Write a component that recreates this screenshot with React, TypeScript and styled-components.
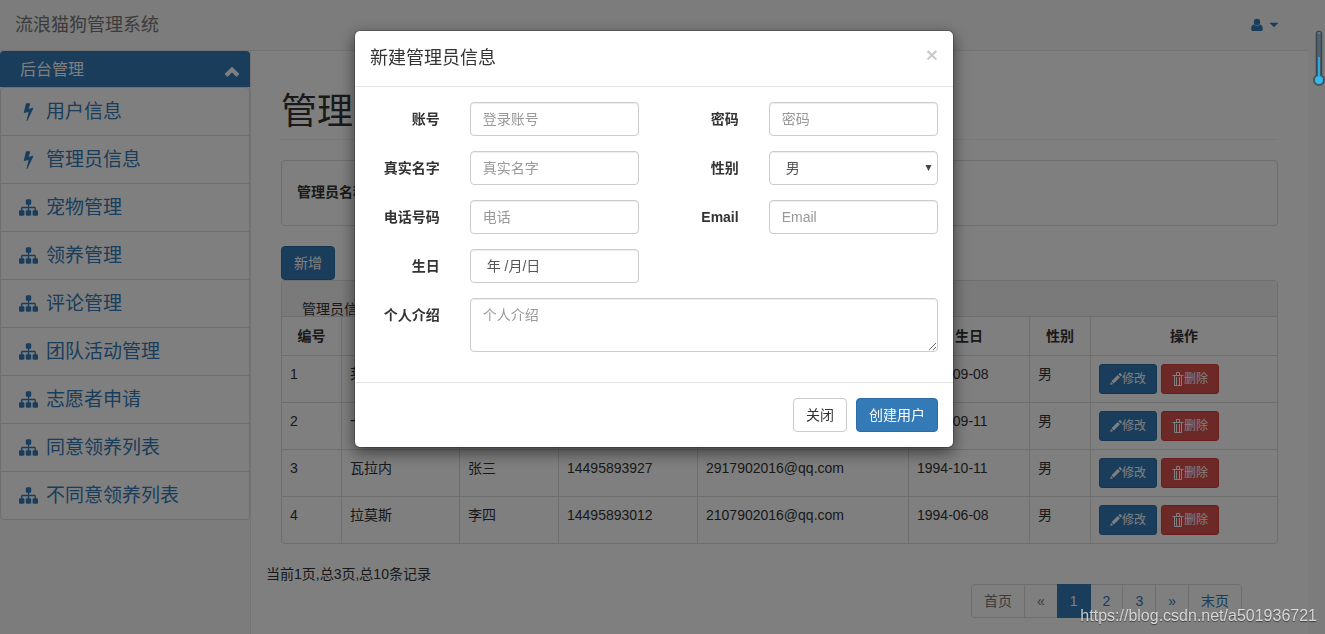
import React from "react";
import styled, { createGlobalStyle, css } from "styled-components";

const GlobalStyle = createGlobalStyle`
  *, *::before, *::after { box-sizing: border-box; }
  body {
    margin: 0;
    background: #f8f8f8;
    color: #333;
    font: 14px/20px "Liberation Sans", "Noto Sans CJK SC", sans-serif;
    overflow: hidden;
  }
  button, input, select, textarea { font: inherit; }
  a { color: #337ab7; text-decoration: none; }
`;

const Page = styled.div`
  min-height: 100vh;
  padding-right: 17px;
  display: flex;
  flex-direction: column;
`;

const TopBar = styled.header`
  display: flex;
  align-items: center;
  justify-content: space-between;
  height: 51px;
  padding: 0 29px 0 15px;
  border-bottom: 1px solid #e7e7e7;
`;

const Brand = styled.a`
  color: #777;
  font-size: 18px;
  line-height: 20px;
`;

const UserMenu = styled.button`
  display: flex;
  align-items: center;
  gap: 5px;
  padding: 0;
  border: 0;
  background: none;
  color: #337ab7;
`;

const Columns = styled.div`
  display: flex;
  flex: 1;
`;

const Sidebar = styled.nav`
  flex: 0 0 250px;
`;

const SidebarHeading = styled.button`
  display: flex;
  align-items: center;
  justify-content: space-between;
  width: 100%;
  height: 36px;
  padding: 2px 10px 0 20px;
  border: 0;
  border-radius: 4px 4px 0 0;
  background: #337ab7;
  color: #fff;
  font-size: 16px;
`;

const MenuList = styled.ul`
  margin: 0;
  padding: 0;
  list-style: none;
  border: 1px solid #ddd;
  border-radius: 4px;
  background: #fff;
`;

const MenuItem = styled.li`
  & + & { border-top: 1px solid #ddd; }
`;

const MenuLink = styled.a`
  display: flex;
  align-items: center;
  gap: 8px;
  height: 47px;
  padding: 0 18px;
  font-size: 19px;
  line-height: 28px;
`;

const Main = styled.main`
  flex: 1;
  min-width: 0;
  padding: 0 30px;
  border-left: 1px solid #e7e7e7;
  background: #fff;
`;

const PageTitle = styled.h1`
  margin: 40px 0 20px;
  padding: 1px 0 8px;
  border-bottom: 1px solid #eee;
  font-size: 36px;
  line-height: 39px;
  font-weight: 400;
`;

const SearchPanel = styled.section`
  margin-bottom: 20px;
  padding: 21px 15px 23px;
  border: 1px solid #ddd;
  border-radius: 4px;
  font-weight: 700;
`;

const tones = {
  plain: css`background: #fff; border-color: #ccc; color: #333;`,
  primary: css`background: #337ab7; border-color: #2e6da4; color: #fff;`,
  danger: css`background: #d9534f; border-color: #d43f3a; color: #fff;`,
};

const Button = styled.button<{ $tone: keyof typeof tones; $small?: boolean }>`
  display: inline-flex;
  align-items: center;
  justify-content: center;
  height: ${(p) => (p.$small ? 30 : 34)}px;
  padding: 0 ${(p) => (p.$small ? 10 : 12)}px;
  border: 1px solid;
  border-radius: ${(p) => (p.$small ? 3 : 4)}px;
  font-size: ${(p) => (p.$small ? 12 : 14)}px;
  white-space: nowrap;
  ${(p) => tones[p.$tone]}
`;

const TablePanel = styled.section`
  border: 1px solid #ddd;
  border-radius: 4px;
  overflow: hidden;
`;

const PanelHeading = styled.div`
  height: 36px;
  padding: 18px 20px 0;
  border-bottom: 1px solid #ddd;
  background: #f5f5f5;
  line-height: 20px;
`;

const Table = styled.table`
  width: 100%;
  table-layout: fixed;
  border-spacing: 0;
`;

const HeadCell = styled.th`
  height: 38px;
  padding: 9px 8px;
  text-align: center;
  & + & { border-left: 1px solid #ddd; }
`;

const Cell = styled.td`
  padding: 8px;
  border-top: 1px solid #ddd;
  vertical-align: top;
  white-space: nowrap;
  & + & { border-left: 1px solid #ddd; }
`;

const Actions = styled.div`
  display: flex;
  gap: 4px;
`;

const Footer = styled.footer`
  margin: 20px -15px 0;
`;

const Pagination = styled.ul`
  display: flex;
  justify-content: flex-end;
  margin: 0;
  padding: 0 51px 0 0;
  list-style: none;
`;

const PageLink = styled.a<{ $state?: "active" | "disabled" }>`
  display: block;
  margin-left: -1px;
  padding: 6px 12px;
  border: 1px solid #ddd;
  background: #fff;
  li:first-child > & { border-radius: 4px 0 0 4px; }
  li:last-child > & { border-radius: 0 4px 4px 0; }
  ${(p) => p.$state === "disabled" && css`color: #777;`}
  ${(p) =>
    p.$state === "active" &&
    css`
      position: relative;
      background: #337ab7;
      border-color: #337ab7;
      color: #fff;
    `}
`;

const Backdrop = styled.div`
  position: fixed;
  inset: 0;
  padding: 30px 17px 30px 0;
  background: rgba(0, 0, 0, 0.5);
`;

const Dialog = styled.form`
  width: 600px;
  max-width: 100%;
  margin: 0 auto;
  border: 1px solid rgba(0, 0, 0, 0.2);
  border-radius: 6px;
  background: #fff;
  background-clip: padding-box;
  box-shadow: 0 5px 15px rgba(0, 0, 0, 0.5);
`;

const DialogHeader = styled.div`
  display: flex;
  justify-content: space-between;
  align-items: flex-start;
  height: 56px;
  padding: 13px 15px;
  border-bottom: 1px solid #e5e5e5;
`;

const DialogTitle = styled.h4`
  margin: 0;
  font-size: 18px;
  line-height: 28px;
  font-weight: 400;
`;

const CloseButton = styled.button`
  padding: 0;
  border: 0;
  background: none;
  color: #000;
  opacity: 0.2;
  font-size: 21px;
  line-height: 21px;
  font-weight: 700;
`;

const Fields = styled.div`
  display: grid;
  grid-template-columns: 2fr 4fr 2fr 4fr;
  row-gap: 15px;
  padding: 15px 0 30px;
`;

const Label = styled.label<{ $newRow?: boolean }>`
  padding: 7px 15px 0;
  text-align: right;
  font-weight: 700;
  white-space: nowrap;
  ${(p) => p.$newRow && css`grid-column-start: 1;`}
`;

const Control = styled.div<{ $wide?: boolean }>`
  position: relative;
  display: flex;
  padding: 0 15px;
  ${(p) => p.$wide && css`grid-column: span 3;`}
`;

const fieldStyle = css`
  width: 100%;
  min-width: 0;
  height: 34px;
  padding: 6px 12px;
  border: 1px solid #ccc;
  border-radius: 4px;
  background: #fff;
  color: #555;
  line-height: 20px;
  box-shadow: inset 0 1px 1px rgba(0, 0, 0, 0.075);
  &::placeholder { color: #999; opacity: 1; }
`;

const Input = styled.input`
  ${fieldStyle}
`;

const DateInput = styled.input`
  ${fieldStyle}
  padding-left: 16px;
  &::placeholder { color: #555; }
`;

const Select = styled.select`
  ${fieldStyle}
  padding-left: 16px;
  appearance: none;
`;

const SelectArrow = styled.svg`
  position: absolute;
  top: 14px;
  right: 21px;
  pointer-events: none;
`;

const TextArea = styled.textarea`
  ${fieldStyle}
  height: 54px;
`;

const DialogFooter = styled.div`
  display: flex;
  justify-content: flex-end;
  gap: 9px;
  padding: 15px;
  border-top: 1px solid #e5e5e5;
`;

const Thermometer = styled.svg`
  position: fixed;
  top: 29px;
  right: 0;
`;

const Watermark = styled.div`
  position: fixed;
  right: 8px;
  bottom: 8px;
  color: rgba(255, 255, 255, 0.75);
  font-size: 16px;
  line-height: 20px;
  text-shadow: 0 1px 1px rgba(0, 0, 0, 0.5);
`;

const BoltIcon = () => (
  <svg width="19" height="19" viewBox="0 0 1792 1792" fill="currentColor" aria-hidden="true">
    <path d="M1333 566q18 20 7 44l-540 1157q-13 25-42 25-4 0-14-2-17-5-25.5-19t-4.5-30l197-808-406 101q-4 1-12 1-18 0-31-11-18-15-13-39l201-825q4-14 16-23t28-9h328q19 0 32 12.5t13 29.5q0 8-5 18l-171 463 396-98q8-2 12-2 19 0 34 15z" />
  </svg>
);

const SitemapIcon = () => (
  <svg width="19" height="19" viewBox="0 0 1792 1792" fill="currentColor" aria-hidden="true">
    <path d="M1792 1248v320q0 40-28 68t-68 28h-320q-40 0-68-28t-28-68v-320q0-40 28-68t68-28h96v-192h-512v192h96q40 0 68 28t28 68v320q0 40-28 68t-68 28h-320q-40 0-68-28t-28-68v-320q0-40 28-68t68-28h96v-192h-512v192h96q40 0 68 28t28 68v320q0 40-28 68t-68 28h-320q-40 0-68-28t-28-68v-320q0-40 28-68t68-28h96v-192q0-52 38-90t90-38h512v-192h-96q-40 0-68-28t-28-68v-320q0-40 28-68t68-28h320q40 0 68 28t28 68v320q0 40-28 68t-68 28h-96v192h512q52 0 90 38t38 90v192h96q40 0 68 28t28 68z" />
  </svg>
);

const UserIcon = () => (
  <svg width="14" height="14" viewBox="0 0 14 14" fill="currentColor" aria-hidden="true">
    <circle cx="7" cy="4" r="3.200" />
    <path d="M4 6.500c1.800 1.600 4.200 1.600 6 0 2 .2 2.800 2.200 2.800 4.400 0 1.400-.8 2.100-2 2.100H3.200c-1.200 0-2-.7-2-2.100C1.200 8.700 2 6.700 4 6.500z" />
  </svg>
);

const CaretIcon = () => (
  <svg width="10" height="6" viewBox="0 0 10 6" fill="currentColor" aria-hidden="true">
    <path d="M1 1h8L5 5z" stroke="currentColor" strokeLinejoin="round" strokeWidth=".5" />
  </svg>
);

const ChevronUpIcon = () => (
  <svg width="16" height="16" viewBox="0 0 16 16" fill="none" aria-hidden="true">
    <path d="M2 13.500l6-6 6 6" stroke="#fff" strokeWidth="4" />
  </svg>
);

const PencilIcon = () => (
  <svg width="12" height="12" viewBox="0 0 12 12" fill="currentColor" aria-hidden="true">
    <path d="M9.300.4c.4-.4.9-.4 1.300 0l1 1c.4.4.4.9 0 1.300l-.9.900-2.300-2.300zM7.700 2l2.300 2.300-6.200 6.200-2.300-2.300zM1 8.900L3.100 11 .1 12z" />
  </svg>
);

const TrashIcon = () => (
  <svg width="12" height="14" viewBox="0 0 12 14" fill="none" stroke="currentColor" aria-hidden="true">
    <path d="M.5 3.500h11M4.500 3V.5h3V3M2.500 4v9.500h7V4M4.500 5v8M7.500 5v8" />
  </svg>
);

const menu = [
  { text: "用户信息", Icon: BoltIcon },
  { text: "管理员信息", Icon: BoltIcon },
  { text: "宠物管理", Icon: SitemapIcon },
  { text: "领养管理", Icon: SitemapIcon },
  { text: "评论管理", Icon: SitemapIcon },
  { text: "团队活动管理", Icon: SitemapIcon },
  { text: "志愿者申请", Icon: SitemapIcon },
  { text: "同意领养列表", Icon: SitemapIcon },
  { text: "不同意领养列表", Icon: SitemapIcon },
];

const columns = [
  { title: "编号", width: 59 },
  { title: "用户名", width: 118 },
  { title: "姓名", width: 99 },
  { title: "电话", width: 139 },
  { title: "Email", width: 211 },
  { title: "生日", width: 121 },
  { title: "性别", width: 61 },
  { title: "操作", width: 187 },
];

const admins = [
  ["1", "莱昂", "王五", "14495893925", "2917902015@qq.com", "1994-09-08", "男"],
  ["2", "一凡", "赵六", "14495893926", "2917902014@qq.com", "1994-09-11", "男"],
  ["3", "瓦拉内", "张三", "14495893927", "2917902016@qq.com", "1994-10-11", "男"],
  ["4", "拉莫斯", "李四", "14495893012", "2107902016@qq.com", "1994-06-08", "男"],
];

const pages: { text: string; state?: "active" | "disabled" }[] = [
  { text: "首页", state: "disabled" },
  { text: "«", state: "disabled" },
  { text: "1", state: "active" },
  { text: "2" },
  { text: "3" },
  { text: "»" },
  { text: "末页" },
];

export default function App() {
  return (
    <>
      <GlobalStyle />
      <Page>
        <TopBar>
          <Brand href="#">流浪猫狗管理系统</Brand>
          <UserMenu type="button" aria-label="用户">
            <UserIcon />
            <CaretIcon />
          </UserMenu>
        </TopBar>
        <Columns>
          <Sidebar>
            <SidebarHeading type="button">
              后台管理
              <ChevronUpIcon />
            </SidebarHeading>
            <MenuList>
              {menu.map(({ text, Icon }) => (
                <MenuItem key={text}>
                  <MenuLink href="#">
                    <Icon />
                    {text}
                  </MenuLink>
                </MenuItem>
              ))}
            </MenuList>
          </Sidebar>
          <Main>
            <PageTitle>管理员信息</PageTitle>
            <SearchPanel>管理员名称</SearchPanel>
            <Button type="button" $tone="primary">新增</Button>
            <TablePanel>
              <PanelHeading>管理员信息列表</PanelHeading>
              <Table>
                <colgroup>
                  {columns.map((c) => (
                    <col key={c.title} width={c.width} />
                  ))}
                </colgroup>
                <thead>
                  <tr>
                    {columns.map((c) => (
                      <HeadCell key={c.title}>{c.title}</HeadCell>
                    ))}
                  </tr>
                </thead>
                <tbody>
                  {admins.map((row) => (
                    <tr key={row[0]}>
                      {row.map((value, i) => (
                        <Cell key={i}>{value}</Cell>
                      ))}
                      <Cell>
                        <Actions>
                          <Button type="button" $tone="primary" $small>
                            <PencilIcon />
                            修改
                          </Button>
                          <Button type="button" $tone="danger" $small>
                            <TrashIcon />
                            删除
                          </Button>
                        </Actions>
                      </Cell>
                    </tr>
                  ))}
                </tbody>
              </Table>
            </TablePanel>
            <Footer>
              当前1页,总3页,总10条记录
              <Pagination>
                {pages.map((p) => (
                  <li key={p.text}>
                    <PageLink href="#" $state={p.state}>{p.text}</PageLink>
                  </li>
                ))}
              </Pagination>
            </Footer>
          </Main>
        </Columns>
      </Page>

      <Backdrop>
        <Dialog role="dialog" aria-labelledby="dialog-title">
          <DialogHeader>
            <DialogTitle id="dialog-title">新建管理员信息</DialogTitle>
            <CloseButton type="button" aria-label="关闭">×</CloseButton>
          </DialogHeader>
          <Fields>
            <Label htmlFor="account">账号</Label>
            <Control><Input id="account" placeholder="登录账号" /></Control>
            <Label htmlFor="password">密码</Label>
            <Control><Input id="password" type="password" placeholder="密码" /></Control>
            <Label htmlFor="realname">真实名字</Label>
            <Control><Input id="realname" placeholder="真实名字" /></Control>
            <Label htmlFor="gender">性别</Label>
            <Control>
              <Select id="gender" defaultValue="男">
                <option>男</option>
                <option>女</option>
              </Select>
              <SelectArrow width="7" height="6" viewBox="0 0 7 6" fill="#444" aria-hidden="true">
                <path d="M.5 0h6l-3 6z" />
              </SelectArrow>
            </Control>
            <Label htmlFor="phone">电话号码</Label>
            <Control><Input id="phone" placeholder="电话" /></Control>
            <Label htmlFor="email">Email</Label>
            <Control><Input id="email" type="email" placeholder="Email" /></Control>
            <Label htmlFor="birthday">生日</Label>
            <Control><DateInput id="birthday" placeholder="年 /月/日" /></Control>
            <Label htmlFor="intro" $newRow>个人介绍</Label>
            <Control $wide><TextArea id="intro" placeholder="个人介绍" /></Control>
          </Fields>
          <DialogFooter>
            <Button type="button" $tone="plain">关闭</Button>
            <Button type="submit" $tone="primary">创建用户</Button>
          </DialogFooter>
        </Dialog>
      </Backdrop>

      <Thermometer width="13" height="59" viewBox="0 0 13 59" aria-hidden="true">
        <path d="M4.500 46V5a2.500 2.500 0 0 1 5 0v41" fill="#53636e" stroke="#38454d" strokeWidth="1.500" />
        <circle cx="7" cy="51" r="5" fill="#36b8e8" stroke="#44545f" strokeWidth="2" />
        <path d="M7 28v20" stroke="#29a9e8" strokeWidth="2" />
        <path d="M5.500 4h3" stroke="#8d989f" />
      </Thermometer>
      <Watermark>https://blog.csdn.net/a501936721</Watermark>
    </>
  );
}
